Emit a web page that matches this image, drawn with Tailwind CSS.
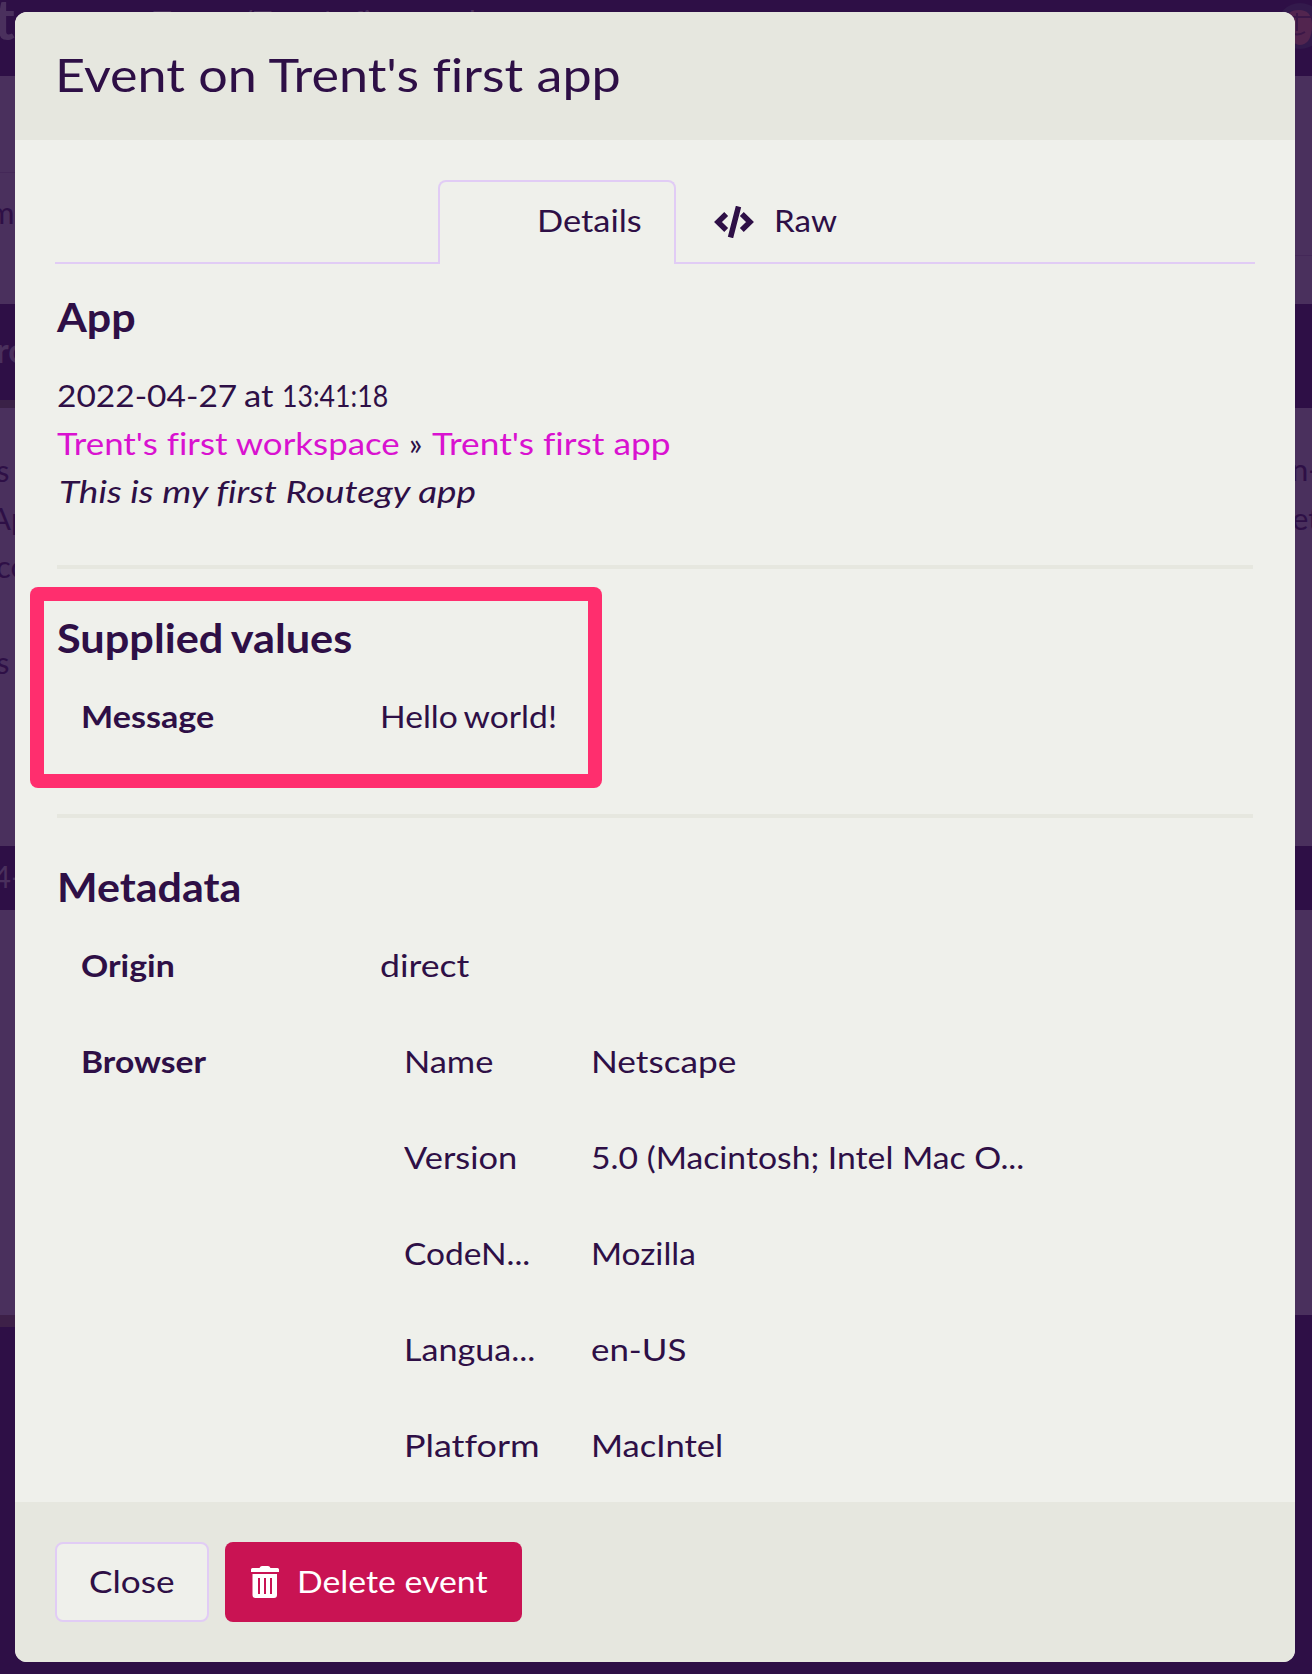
<!DOCTYPE html>
<html lang="en">
<head>
<meta charset="utf-8">
<title>Event on Trent's first app</title>
<script src="https://cdn.jsdelivr.net/npm/@tailwindcss/browser@4"></script>
</head>
<body class="relative h-[1674px] w-[1312px] overflow-hidden bg-[#2e0f46] font-['Lato',sans-serif] text-[31px] leading-[48px] text-[#2e0f46] [font-variant-ligatures:none]">
<!-- Page behind the dialog -->
<div class="flex h-full flex-col" aria-hidden="true">
  <div class="relative h-[76px] text-[#4a305d]">
    <span class="absolute -left-[6px] -top-[13px] text-[56px] font-bold leading-[64px]">t</span>
    <span class="absolute left-[153px] -top-[3px] whitespace-nowrap text-[31px] tracking-[0.2px]">Teams/Trent's first workspace</span>
    <svg class="absolute left-[1277px] top-[3px] h-[46px] w-[46px]" viewBox="0 0 46 46"><circle cx="23" cy="23" r="23" fill="#331a4c"/><path d="M8 20Q9 7 22 7Q35 7 35 22Q35 42 22 42Q10 39 8 20Z" fill="#52254f"/><path d="M8 14h28M20 10v18M12 29q8 5 16 0" stroke="#3b1748" stroke-width="2" fill="none"/></svg>
  </div>
  <div class="relative h-[228px] bg-[#4a305d]">
    <div class="absolute left-0 top-[96px] h-px w-4 bg-[#442858]"></div>
    <div class="absolute right-0 top-[179px] h-px w-5 bg-[#442858]"></div>
    <span class="absolute -left-[11px] top-[112px]">m</span>
  </div>
  <div class="relative h-[96px] text-[34px] text-[#4a305d]"><span class="absolute -left-[4px] top-[22px] font-bold">ro</span></div>
  <div class="flex h-2"><div class="w-1/2 bg-[#3a2147]"></div></div>
  <div class="relative h-[438px] bg-[#4a305d]">
    <span class="absolute -left-[4px] top-[38px]">s</span>
    <span class="absolute -left-[10px] top-[86px]">Ap</span>
    <span class="absolute -left-[4px] top-[134px]">co</span>
    <span class="absolute -left-[4px] top-[230px]">s</span>
    <span class="absolute left-[1291px] top-[37px]">n-</span>
    <span class="absolute left-[1292px] top-[86px]">et</span>
  </div>
  <div class="relative h-[64px] text-[#4a305d]"><span class="absolute -left-[7px] top-[6px]">4-</span></div>
  <div class="h-[405px] bg-[#4a305d]"></div>
  <div class="flex h-3"><div class="w-1/2 bg-[#3d2048]"></div></div>
</div>

<!-- Dialog -->
<main class="absolute left-[15px] top-3 flex h-[1650px] w-[1280px] flex-col overflow-hidden rounded-xl bg-[#eff0eb]">
  <header class="h-[128px] shrink-0 bg-[#e6e7df] px-10 pt-[30px]">
    <h1 class="whitespace-nowrap text-[47px] leading-[64px]"><span class="inline-block origin-left scale-x-[1.108]">Event on Trent's first app</span></h1>
  </header>
  <div class="flex h-[1362px] flex-col px-10 pt-10">
    <nav class="flex h-[84px] whitespace-nowrap">
      <div class="w-[383px] border-b-2 border-[#e1ccf5]"></div>
      <div class="w-[238px] rounded-t-lg border-2 border-b-0 border-[#e1ccf5] pl-[97px] pt-[14px]"><span class="inline-block origin-left scale-x-[1.11]">Details</span></div>
      <div class="flex flex-1 items-start border-b-2 border-[#e1ccf5] pl-[38px] pt-4">
        <svg class="mt-[10px] h-8 w-10" viewBox="0 0 40 32" fill="none" stroke="#2e0f46" stroke-width="5.500"><path d="M12.200 8 4 16l8.200 8M27.800 8l8.200 8-8.200 8M24.500.500l-8 31"/></svg>
        <span class="ml-5 origin-left scale-x-[1.07]">Raw</span>
      </div>
    </nav>
    <section class="mt-[29px] h-[272px] whitespace-nowrap pl-[2px]">
      <h2 class="text-[40px] font-bold"><span class="inline-block origin-left scale-x-[1.075]">App</span></h2>
      <div class="mt-[30px] flex"><span class="w-[187px]"><span class="inline-block origin-left scale-x-[1.08]">2022-04-27</span></span><span class="w-[38px]"><span class="inline-block origin-left scale-x-[1.12]">at</span></span><span class="origin-left scale-x-[0.86]">13:41:18</span></div>
      <div class="flex"><div class="w-[345px]"><a class="inline-block origin-left scale-x-[1.125] text-[#d912d0]">Trent's first workspace</a></div><span class="w-[30px] pl-[7px]">»</span><a class="origin-left scale-x-[1.138] text-[#d912d0]">Trent's first app</a></div>
      <div class="pl-[2px] italic"><span class="inline-block origin-left scale-x-[1.19]">This is my first Routegy app</span></div>
    </section>
    <hr class="mx-[2px] h-1 border-0 bg-[#e6e7df]">
    <section class="relative h-[245px] whitespace-nowrap pl-[2px] pt-[45px]">
      <div class="absolute -left-[25px] top-[18px] h-[201px] w-[572px] rounded-lg bg-[#ff2e6e] p-[14px]"><div class="h-full bg-[#eff0eb]"></div></div>
      <h2 class="relative text-[40px] font-bold"><span class="inline-block origin-left scale-x-[1.082] [word-spacing:-2px]">Supplied values</span></h2>
      <div class="relative mt-[30px] flex"><div class="w-[323px] pl-6 font-bold"><span class="inline-block origin-left scale-x-[1.1]">Message</span></div><span class="origin-left scale-x-[1.085] [word-spacing:-2px]">Hello world!</span></div>
    </section>
    <hr class="mx-[2px] h-1 border-0 bg-[#e6e7df]">
    <section class="whitespace-nowrap pl-[2px] pt-[45px]">
      <h2 class="text-[40px] font-bold"><span class="inline-block origin-left scale-x-[1.075]">Metadata</span></h2>
      <div class="mt-[30px] flex"><div class="w-[323px] pl-6 font-bold"><span class="inline-block origin-left scale-x-[1.09]">Origin</span></div><span class="origin-left scale-x-[1.15]">direct</span></div>
      <div class="mt-12 flex">
        <div class="w-[347px] pl-6 font-bold"><span class="inline-block origin-left scale-x-[1.085]">Browser</span></div>
        <div class="grid grid-cols-[187px_1fr] gap-y-12">
          <div class="origin-left scale-x-[1.11]">Name</div><div class="origin-left scale-x-[1.137]">Netscape</div>
          <div class="origin-left scale-x-[1.11]">Version</div><div class="origin-left scale-x-[1.087]">5.0 (Macintosh; Intel Mac O...</div>
          <div class="origin-left scale-x-[1.08]">CodeN...</div><div class="origin-left scale-x-[1.08]">Mozilla</div>
          <div class="origin-left scale-x-[1.1]">Langua...</div><div class="origin-left scale-x-[1.125]">en-US</div>
          <div class="origin-left scale-x-[1.16]">Platform</div><div class="origin-left scale-x-[1.115]">MacIntel</div>
        </div>
      </div>
    </section>
  </div>
  <footer class="flex h-[160px] shrink-0 items-start gap-4 bg-[#e6e7df] px-10 pt-10">
    <button class="h-20 w-[154px] rounded-lg border-2 border-[#e1ccf5] bg-[#eff0eb] pb-[3px]"><span class="inline-block scale-x-[1.135]">Close</span></button>
    <button class="flex h-20 w-[297px] items-center rounded-lg bg-[#c91353] pl-[26px] text-white">
      <svg class="h-8 w-7" viewBox="0 0 28 32" fill="#fff"><path d="M1.500 2H8.500q.8-2 2.500-2h6q1.700 0 2.500 2h7q1.500 0 1.500 1.500V6H0V3.500Q0 2 1.500 2Z"/><path fill-rule="evenodd" d="M1.500 8h24.500v21q0 3-3 3H4.500q-3 0-3-3ZM7 12v16h2V12ZM13 12v16h2V12ZM19 12v16h2V12Z"/></svg>
      <span class="ml-[18px] origin-left scale-x-[1.09] pb-[3px]">Delete event</span>
    </button>
  </footer>
</main>
</body>
</html>
